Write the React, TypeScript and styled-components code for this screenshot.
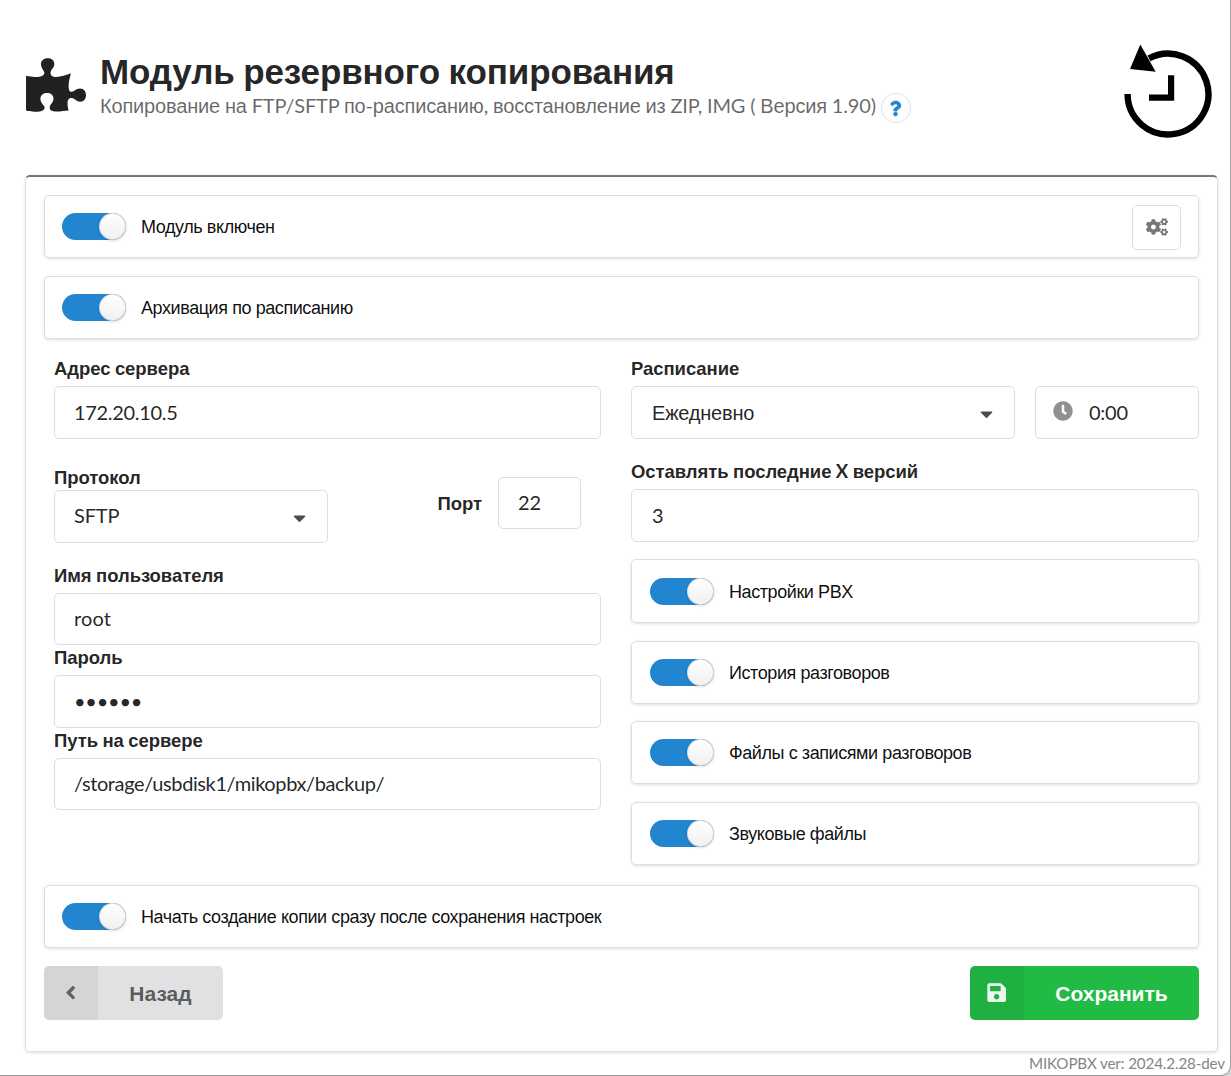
import React from "react";
import styled, { createGlobalStyle } from "styled-components";
import { FaPuzzlePiece, FaQuestion, FaCogs, FaCaretDown, FaClock, FaAngleLeft, FaSave } from "react-icons/fa";

const GlobalStyle = createGlobalStyle`
  * { box-sizing: border-box; }
  body {
    margin: 0;
    background: #d4d6d8;
    font-family: Lato, "Liberation Sans", Arial, sans-serif;
    color: rgba(0, 0, 0, 0.87);
  }
`;

const Window = styled.div`
  width: 1231px;
  height: 1076px;
  background: #fff;
  border-right: 1px solid #a0a0a0;
  border-bottom: 1px solid #969696;
  border-bottom-right-radius: 10px;
  padding: 0 12px 0 25px;
  display: flex;
  flex-direction: column;
  overflow: hidden;
`;

const Header = styled.header`
  height: 175px;
  flex: none;
  display: flex;
  align-items: flex-start;
  padding: 44px 6px 0 1px;
`;

const PuzzleIcon = styled(FaPuzzlePiece)`
  width: 60px;
  height: 54px;
  margin-top: 14px;
  flex: none;
`;

const Titles = styled.div`
  flex: 1;
  padding: 4px 0 0 14px;
`;

const Title = styled.h1`
  margin: 0;
  font-size: 35px;
  letter-spacing: -0.12px;
  line-height: 44px;
  font-weight: 700;
  white-space: nowrap;
`;

const SubTitle = styled.div`
  display: flex;
  align-items: center;
  gap: 5px;
  height: 30px;
  margin-top: -1px;
  font-size: 20px;
  letter-spacing: -0.175px;
  line-height: 26px;
  color: rgba(0, 0, 0, 0.6);
  white-space: pre;

  > span:first-child { margin-top: -6px; }
`;

const HelpBadge = styled.span`
  width: 30px;
  height: 30px;
  border-radius: 50%;
  border: 1px solid #e3e4e5;
  box-shadow: 0 0 1px rgba(34, 36, 38, 0.15);
  display: flex;
  align-items: center;
  justify-content: center;
  color: #2185d0;
  font-size: 15px;
  svg { stroke: #2185d0; stroke-width: 20; overflow: visible; }
`;

const Panel = styled.main`
  height: 877px;
  flex: none;
  border: 1px solid #dededf;
  border-top: 2px solid #767676;
  border-radius: 5px;
  box-shadow: 0 1px 3px rgba(34, 36, 38, 0.15);
  padding: 18px 18px 0;
`;

const ToggleCard = styled.section<{ $height?: number; $inset?: number }>`
  height: ${(p) => p.$height ?? 63}px;
  border: 1px solid #dededf;
  border-radius: 5px;
  box-shadow: 0 1px 3px rgba(34, 36, 38, 0.15);
  padding: 0 17px 0 ${(p) => p.$inset ?? 17}px;
  display: flex;
  align-items: center;
`;

const CardStack = styled.div`
  display: flex;
  flex-direction: column;
  justify-content: space-between;
  gap: 17px;
`;

const Track = styled.span`
  width: 64px;
  height: 27px;
  flex: none;
  border-radius: 14px;
  background: #2185d0;
  display: flex;
  justify-content: flex-end;
`;

const Knob = styled.span`
  width: 27px;
  height: 27px;
  border-radius: 50%;
  background: linear-gradient(#fff, #f0f0f0);
  box-shadow: 0 1px 3px rgba(34, 36, 38, 0.15), 0 0 0 1px rgba(34, 36, 38, 0.15) inset;
`;

const ToggleText = styled.span`
  margin-left: 15px;
  padding-top: 2px;
  flex: 1;
  font-family: "Liberation Sans", Arial, sans-serif;
  font-size: 18px;
  letter-spacing: -0.42px;
  color: rgba(0, 0, 0, 0.95);
  white-space: nowrap;
`;

const GearButton = styled.button`
  width: 49px;
  height: 45px;
  margin-top: 1px;
  padding: 0 0 1px;
  background: #fff;
  border: 1px solid #dededf;
  border-radius: 5px;
  color: #767676;
  font-size: 22px;
  display: flex;
  align-items: center;
  justify-content: center;
`;

const Columns = styled.div`
  display: grid;
  grid-template-columns: 547px 568px;
  column-gap: 30px;
  padding: 17px 0 0 10px;
  height: 546px;
`;

const SwitchStack = styled(CardStack)`
  height: 306px;
`;

const GeneralStack = styled(CardStack)`
  height: 144px;
`;

const Column = styled.div`
  display: flex;
  flex-direction: column;
`;

const Label = styled.label<{ $h?: number }>`
  display: block;
  height: ${(p) => p.$h ?? 30}px;
  flex: none;
  font-size: 18.5px;
  letter-spacing: -0.06px;
  line-height: 24px;
  font-weight: 700;
  white-space: nowrap;
`;

const Field = styled.div<{ $w?: number; $h?: number; $spacing?: number; $inset?: number }>`
  width: ${(p) => (p.$w ? `${p.$w}px` : "100%")};
  height: ${(p) => p.$h ?? 53}px;
  flex: none;
  border: 1px solid #dededf;
  border-radius: 5px;
  padding: 0 21px 2px ${(p) => p.$inset ?? 19}px;
  display: flex;
  align-items: center;
  justify-content: space-between;
  font-size: 20px;
  letter-spacing: ${(p) => p.$spacing ?? 0}px;
  line-height: 24px;
`;

const Caret = styled(FaCaretDown)`
  width: 13px;
  height: 20px;
  margin-top: 4px;
  color: #4c4c4c;
`;

const ClockIcon = styled(FaClock)`
  width: 20px;
  height: 20px;
  margin: -1px 16px 0 -2px;
  color: #909090;
`;

const ScheduleRow = styled.div`
  display: flex;
  justify-content: space-between;
  margin-bottom: 20px;
`;

const ScheduleField = styled(Field)`
  padding-bottom: 0;
  ${Caret} { margin-top: 2px; }
`;

const ProtocolField = styled(Field)`
  padding-bottom: 4px;
  ${Caret} { margin-top: 6px; }
`;

const TimeField = styled(Field)`
  justify-content: flex-start;
`;

const ProtocolRow = styled.div`
  display: flex;
  justify-content: space-between;
  align-items: flex-start;
  height: 124px;
  padding: 26px 20px 0 0;
`;

const PortGroup = styled.div`
  display: flex;
  align-items: center;
  gap: 16px;
  margin-top: 12px;
`;

const VersionsField = styled(Field)`
  margin-bottom: 17px;
`;

const Actions = styled.div`
  display: flex;
  justify-content: space-between;
  height: 54px;
  margin-top: 18px;
`;

const ActionButton = styled.button<{ $primary?: boolean }>`
  width: ${(p) => (p.$primary ? 229 : 179)}px;
  height: 54px;
  padding: 0;
  border: 0;
  border-radius: 5px;
  overflow: hidden;
  display: flex;
  font-family: inherit;
  font-size: 21px;
  font-weight: 700;
  background: ${(p) => (p.$primary ? "#21ba45" : "#e0e1e2")};
  color: ${(p) => (p.$primary ? "#fff" : "rgba(0, 0, 0, 0.6)")};

  > span {
    flex: 1;
    align-self: center;
    text-align: center;
  }
`;

const ButtonIcon = styled.i`
  width: 54px;
  height: 54px;
  display: flex;
  align-items: center;
  justify-content: center;
  background: rgba(0, 0, 0, 0.05);
  font-size: 21.33px;
  svg { opacity: 0.9; }
`;

const Footer = styled.footer`
  align-self: flex-end;
  margin-right: -7px;
  font-size: 15.2px;
  letter-spacing: -0.14px;
  line-height: 22px;
  color: #858585;
`;

const Cyrillic = styled.span`
  font-family: "Liberation Sans", Arial, sans-serif;
`;

/* Latin, digits and spaces stay in Lato; Cyrillic words use the Arial-width face. */
const Mixed = ({ text }: { text: string }) => (
  <span>
    {text.split(/([А-Яа-яЁё]+)/).map((part, i) =>
      i % 2 ? <Cyrillic key={i}>{part}</Cyrillic> : part
    )}
  </span>
);

const Toggle = ({ text, height, inset, children }: {
  text: string; height?: number; inset?: number; children?: React.ReactNode;
}) => (
  <ToggleCard $height={height} $inset={inset}>
    <Track><Knob /></Track>
    <ToggleText>{text}</ToggleText>
    {children}
  </ToggleCard>
);

const HistoryLogo = () => (
  <svg width="90" height="96" viewBox="0 0 90 96">
    <path d="M5.6 50A40.4 40.4 0 1 0 27 14.4" fill="none" stroke="#000" strokeWidth="6.4" />
    <path d="M18.3.5 8 25l25.7 2.8z" />
    <path d="M46 31.2h6.2v25.5H27v-6.2h19z" />
  </svg>
);

export default function App() {
  return (
    <>
      <GlobalStyle />
      <Window>
        <Header>
          <PuzzleIcon />
          <Titles>
            <Title><Mixed text="Модуль резервного копирования" /></Title>
            <SubTitle>
              <Mixed text="Копирование на FTP/SFTP по-расписанию, восстановление из ZIP, IMG ( Версия 1.90)" />
              <HelpBadge><FaQuestion /></HelpBadge>
            </SubTitle>
          </Titles>
          <HistoryLogo />
        </Header>
        <Panel>
          <GeneralStack>
            <Toggle text="Модуль включен">
              <GearButton><FaCogs /></GearButton>
            </Toggle>
            <Toggle text="Архивация по расписанию" />
          </GeneralStack>
          <Columns>
            <Column>
              <Label><Mixed text="Адрес сервера" /></Label>
              <Field $spacing={-0.32}>172.20.10.5</Field>
              <ProtocolRow>
                <div>
                  <Label $h={25}><Mixed text="Протокол" /></Label>
                  <ProtocolField $w={274} $spacing={-0.15}>SFTP<Caret /></ProtocolField>
                </div>
                <PortGroup>
                  <Label $h={24}><Mixed text="Порт" /></Label>
                  <Field $w={83} $h={52}>22</Field>
                </PortGroup>
              </ProtocolRow>
              <Label><Mixed text="Имя пользователя" /></Label>
              <Field $h={52} $spacing={0.1}>root</Field>
              <Label><Mixed text="Пароль" /></Label>
              <Field $spacing={-0.25}>••••••</Field>
              <Label><Mixed text="Путь на сервере" /></Label>
              <Field $h={52} $spacing={-0.39}>/storage/usbdisk1/mikopbx/backup/</Field>
            </Column>
            <Column>
              <Label><Mixed text="Расписание" /></Label>
              <ScheduleRow>
                <ScheduleField $w={384} $inset={20} $spacing={-0.2}><Mixed text="Ежедневно" /><Caret /></ScheduleField>
                <TimeField $w={164} $spacing={-0.25}><ClockIcon />0:00</TimeField>
              </ScheduleRow>
              <Label><Mixed text="Оставлять последние X версий" /></Label>
              <VersionsField $inset={20}>3</VersionsField>
              <SwitchStack>
                <Toggle text="Настройки PBX" inset={18} height={64} />
                <Toggle text="История разговоров" inset={18} />
                <Toggle text="Файлы с записями разговоров" inset={18} />
                <Toggle text="Звуковые файлы" inset={18} />
              </SwitchStack>
            </Column>
          </Columns>
          <Toggle text="Начать создание копии сразу после сохранения настроек" />
          <Actions>
            <ActionButton>
              <ButtonIcon><FaAngleLeft /></ButtonIcon>
              <Mixed text="Назад" />
            </ActionButton>
            <ActionButton $primary>
              <ButtonIcon><FaSave /></ButtonIcon>
              <Mixed text="Сохранить" />
            </ActionButton>
          </Actions>
        </Panel>
        <Footer>MIKOPBX ver: 2024.2.28-dev</Footer>
      </Window>
    </>
  );
}
